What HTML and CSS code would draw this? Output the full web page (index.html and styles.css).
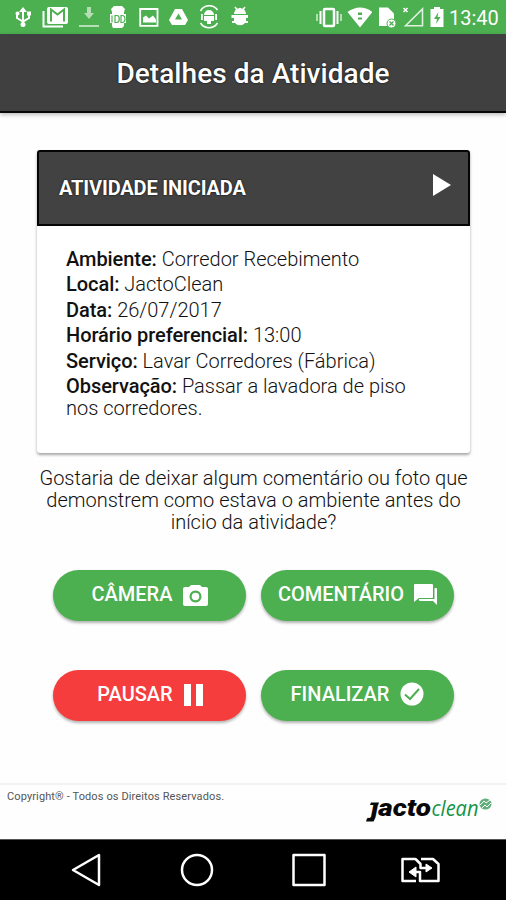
FILE: index.html
```html
<!DOCTYPE html>
<html lang="pt-BR">
<head>
<meta charset="utf-8">
<title>Detalhes da Atividade</title>
<link rel="stylesheet" href="styles.css">
</head>
<body>
<div class="status">
  <div class="notifications">
    <svg width="18" height="22" viewBox="14 6 18 22"><g fill="none" stroke="#fff" stroke-width="2"><path d="M23 10v14M17 14v4l6 3.500 6-3.500v-4"/></g><path fill="#fff" d="M23 7l4 5h-8z"/><circle cx="23" cy="24.500" r="2.500" fill="#fff"/><circle cx="17.500" cy="13.500" r="2" fill="#fff"/><path fill="#fff" d="M27 11.500h4v4h-4z"/></svg>
    <svg width="26" height="22" viewBox="41 6 26 22"><path d="M42.500 11v15.500H62" fill="none" stroke="#fff" stroke-width="2"/><rect x="46" y="7" width="21" height="17" rx="2" fill="#fff"/><path d="M50 21.500v-12l6.500 5 6.500-5v12" fill="none" stroke="#4caf50" stroke-width="2"/></svg>
    <svg width="20" height="22" viewBox="75 6 20 22"><path d="M83 7h4v6h3l-5 6-5-6h3zM75 25h20v2H75z" fill="#b5deb7"/></svg>
    <svg width="19" height="24" viewBox="107 5 19 24"><path d="M112 6h8l3 3-1 3v14l-2 2h-9l-1-2V12l-1-3z" fill="#fff"/><path d="M108 14h16v9h-16z" fill="#fff"/><path d="M110 15.500v7M113 15.500v7h2c3 0 3-7 0-7zM119 15.500v7h1c4 0 4-7 0-7z" fill="none" stroke="#4caf50" stroke-width="1.200"/></svg>
    <svg width="20" height="22" viewBox="137 6 20 22"><path d="M138.200 9h17.300v16.800h-17.300z" fill="none" stroke="#fff" stroke-width="1.800"/><path d="M141 22.500v-5l3-2 3 3 4-3 3 4v3z" fill="#fff"/></svg>
    <svg width="19" height="22" viewBox="168 6 19 22"><path d="M174 9h7l6 11-3 5h-13l-3-5z" fill="#fff"/><path d="M177.500 13.500l3.500 6h-7z" fill="#4caf50"/></svg>
    <svg width="22" height="24" viewBox="198 5 22 24"><g fill="none" stroke="#fff" stroke-width="1.600"><path d="M200.500 11a10 10 0 0 1 17-1M217.500 23a10 10 0 0 1-17 0"/></g><path d="M204 15a5 5 0 0 1 10 0v6h-3v3h-4v-3h-3zM201 14h1.800v6H201zM215.200 14h1.800v6h-1.800z" fill="#fff"/><path d="M204 15.500h10" stroke="#4caf50"/></svg>
    <svg width="18" height="22" viewBox="230 6 18 22"><path d="M234 7l3 4M244 7l-3 4" stroke="#fff" stroke-width="1.500"/><path d="M233 14a6 6 0 0 1 12 0zM230.500 15H247v3h-2v3h2v2h-3a6 5 0 0 1-10 0h-3v-2h2v-3h-2.500z" fill="#fff"/></svg>
  </div>
  <div class="system">
    <svg width="26" height="22" viewBox="316 6 26 22"><rect x="324" y="9" width="10" height="17" rx="1" fill="none" stroke="#fff" stroke-width="2.500"/><path d="M320.500 11v13M337.500 11v13" stroke="#fff" stroke-width="2"/><path d="M317 14v7M341 14v7" stroke="#d6edd7" stroke-width="1.500"/></svg>
    <svg width="25" height="22" viewBox="347 6 25 22"><path d="M347.500 12q12.500-9 25 0L360 27.500z" fill="#fff"/><path d="M358 12.500h4v2.500h-4zM358 17.500h4v2h-4z" fill="#4caf50"/></svg>
    <svg width="19" height="22" viewBox="378 6 19 22"><path d="M379 7.500h9l6 6V26h-15z" fill="#fff"/><circle cx="391.500" cy="23.500" r="4.500" fill="#fff" stroke="#4caf50"/><path d="M389.500 21.500l4 4m0-4l-4 4" stroke="#4caf50" stroke-width="1.300"/></svg>
    <svg width="22" height="22" viewBox="401 6 22 22"><path d="M404.500 25.800L421.500 9v16.800z" fill="none" stroke="#dff2e0" stroke-width="1.600"/><path d="M402.500 8l4 4m0-4l-4 4" stroke="#fff" stroke-width="1.500"/></svg>
    <svg width="14" height="22" viewBox="430 6 14 22"><path d="M434 7h6v2h3.500v18h-13V9h3.500z" fill="#fff"/><path d="M438.500 12l-4.500 7h3l-1 5 4.500-7h-3z" fill="#4caf50"/></svg>
    <span class="clock">13:40</span>
  </div>
</div>
<header class="appbar"><h1>Detalhes da Atividade</h1></header>
<main>
  <section class="card">
    <div class="card-head"><h2>ATIVIDADE INICIADA</h2>
      <svg width="18" height="22" viewBox="0 0 18 22"><path d="M0 0l18 11L0 22z" fill="#fff"/></svg></div>
    <div class="card-body">
      <p><b>Ambiente:</b> Corredor Recebimento</p>
      <p><b>Local:</b> JactoClean</p>
      <p><b>Data:</b> 26/07/2017</p>
      <p><b>Horário preferencial:</b> 13:00</p>
      <p><b>Serviço:</b> Lavar Corredores (Fábrica)</p>
      <p><b>Observação:</b> Passar a lavadora de piso<br>nos corredores.</p>
    </div>
  </section>
  <p class="question">Gostaria de deixar algum comentário ou foto que<br>demonstrem como estava o ambiente antes do<br>início da atividade?</p>
  <div class="actions">
    <button class="btn camera"><span>CÂMERA</span><svg width="25" height="21" viewBox="0 0 25 21"><path fill="#fff" fill-rule="evenodd" d="M8 0h9l2 2h4q2 0 2 2v15q0 2-2 2H2q-2 0-2-2V4q0-2 2-2h4zM12.500 5.500a6 6 0 1 0 .01 0z"/><circle cx="12.500" cy="11.500" r="3.800" fill="#fff"/></svg></button>
    <button class="btn comment"><span>COMENTÁRIO</span><svg width="23" height="22" viewBox="0 0 23 22"><path fill="#fff" d="M1 0h17q1 0 1 1v12q0 1-1 1H5l-5 4V1q0-1 1-1zM20.500 4H22q1 0 1 1v16l-4-4H6q-1 0-1-1v-1h15.500z"/></svg></button>
    <button class="btn pause"><span>PAUSAR</span><svg width="19" height="22" viewBox="0 0 19 22"><path fill="#fff" d="M0 0h7v22H0zM12 0h7v22h-7z"/></svg></button>
    <button class="btn finish"><span>FINALIZAR</span><svg width="24" height="24" viewBox="0 0 24 24"><circle cx="12" cy="12" r="11.500" fill="#fff"/><path d="M5 12.500l5 4.500 9-10" fill="none" stroke="#4caf50" stroke-width="2"/></svg></button>
  </div>
</main>
<footer>
  <small>Copyright® - Todos os Direitos Reservados.</small>
  <svg class="logo" width="130" height="46" viewBox="362 788 130 46">
    <text class="jacto" x="371" y="815.500" textLength="60" lengthAdjust="spacingAndGlyphs">jacto</text>
    <path d="M370 796h13v6h-13z" fill="#fefefe"/>
    <path d="M371 802.500h8l-1 2.500h-8zM367 818.500h8l-1.500 3H366z" fill="#080808"/>
    <text class="clean" x="431.500" y="815.500" textLength="47" lengthAdjust="spacingAndGlyphs">clean</text>
    <ellipse cx="485.500" cy="804" rx="6" ry="5.500" fill="#63af7c"/>
    <path d="M480 805l4-4 2 2 4-3M482 808l3-3 2 2 4-4" fill="none" stroke="#fff" stroke-width="1"/>
  </svg>
</footer>
<nav>
  <svg width="30" height="34" viewBox="71 853 30 34"><path d="M99 855v30L73 870z"/></svg>
  <svg width="34" height="34" viewBox="180 853 34 34"><circle cx="197" cy="870" r="15"/></svg>
  <svg width="34" height="34" viewBox="292 853 34 34"><rect x="293.500" y="855" width="31" height="30"/></svg>
  <svg width="40" height="34" viewBox="401 853 40 34"><path d="M416 881h-13.500v-22h13l5 5v4h9M421 859h12l5.500 5v17H420v-9h-9"/><path d="M426 864l6 4-6 4zM416 867l-7 5 7 5z" fill="#fff" stroke-width="1"/></svg>
</nav>
</body>
</html>
```
FILE: styles.css
```css
* { box-sizing: border-box; }
body { margin: 0; width: 506px; height: 900px; display: flex; flex-direction: column; background: #fefefe; font-family: Roboto, sans-serif; color: #222; overflow: hidden; }
svg { display: block; flex: none; }
h1, h2, p { margin: 0; }
.status { height: 34px; flex: none; background: #4caf50; display: flex; justify-content: space-between; padding: 0 8px 0 14px; }
.notifications, .system { display: flex; align-items: center; }
.notifications { gap: 10.400px; }
.system { gap: 5.500px; }
.clock { color: #fff; font-size: 20px; line-height: 34px; width: 49px; white-space: nowrap; padding-top: 2px; }
.appbar { height: 79px; flex: none; background: #404040; border-bottom: 2px solid #080808; box-shadow: 0 2px 4px rgba(0,0,0,.25); display: flex; justify-content: center; }
h1 { color: #fff; font-size: 28px; font-weight: 500; letter-spacing: .05px; line-height: 79px; text-shadow: 0 0 2px #000; white-space: nowrap; }
main { flex: none; height: 670px; padding: 37px 36px 0 37px; }
.card { height: 303px; border-radius: 3px; background: #fff; box-shadow: 0 2px 3px rgba(0,0,0,.35); }
.card-head { height: 76px; border: 2px solid #050505; border-radius: 3px 3px 0 0; background: #424242; display: flex; justify-content: space-between; padding: 0 17px 0 20px; }
.card-head h2 { color: #fff; font-size: 20px; font-weight: 700; letter-spacing: -.15px; line-height: 73px; text-shadow: 0 0 2px #000; white-space: nowrap; }
.card-head svg { margin-top: 22px; }
.card-body { padding: 22px 0 0 29px; font-size: 20px; line-height: 22.400px; font-weight: 300; color: #111; white-space: nowrap; }
.card-body p { margin-bottom: 3px; }
.card-body b { font-weight: 500; color: #111; letter-spacing: -.06px; }
.question { margin-top: 13.500px; text-align: center; font-size: 20px; font-weight: 300; line-height: 22.400px; color: #111; white-space: nowrap; }
.actions { margin: 36.300px 0 0 16px; display: grid; grid-template-columns: 193px 193px; grid-template-rows: 51px 51px; gap: 49px 15px; }
.btn { border: 0; padding: 0 0 3px 1px; border-radius: 26px; background: #4caf50; color: #fff; font: 500 20px Roboto, sans-serif; display: flex; align-items: center; justify-content: center; gap: 11px; box-shadow: 0 2px 3px rgba(0,0,0,.3); white-space: nowrap; }
.camera svg, .comment svg, .pause svg { margin-top: 2px; }
.comment { gap: 10px; padding-left: 0; }
.pause { background: #f53d3d; }
.finish { padding-right: 1px; }
footer { height: 56px; flex: none; border-top: 2px solid #f2f2f2; display: flex; justify-content: space-between; padding: 0 14px 0 7px; }
footer small { font-size: 11px; letter-spacing: .12px; line-height: 23px; color: #555; white-space: nowrap; }
.logo { margin-top: 3px; }
.jacto { font: italic 900 23px Roboto, sans-serif; fill: #080808; }
.clean { font: italic 400 21px "Open Sans", sans-serif; fill: #159447; }
nav { height: 61px; flex: none; background: #000; border-top: 1px solid #555; display: flex; align-items: center; padding: 0 0 0 71px; }
nav svg { fill: none; stroke: #fff; stroke-width: 2.500; stroke-linejoin: round; margin-right: 79px; }
nav svg:nth-child(2) { margin-right: 78px; }
nav svg:nth-child(3) { margin-right: 75px; }
nav svg:last-child { margin-right: 0; }
```
